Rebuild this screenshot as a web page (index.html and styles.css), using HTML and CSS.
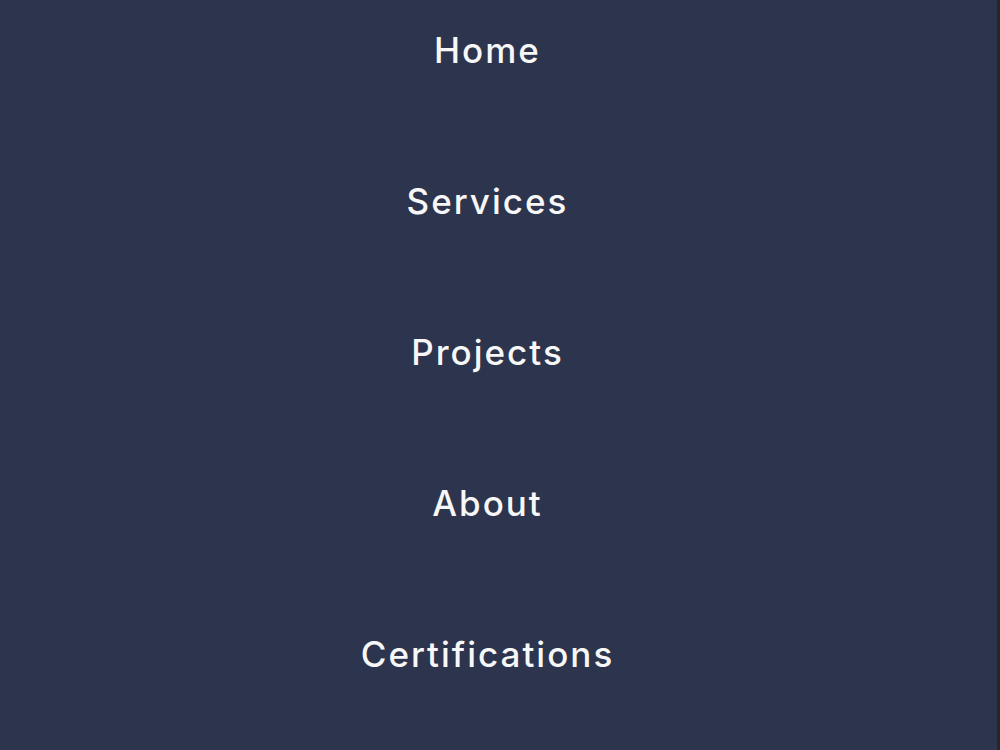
FILE: index.html
```html
<!doctype html>
<html lang="en">
<head>
    <meta charset="utf-8">
    <title>Menu</title>
    <meta name="viewport" content="width=device-width, initial-scale=1">
    <link rel="stylesheet" href="styles.css">
</head>
<body class="menu-body">
<div class="menu-page">
    <nav class="menu-nav">
        <ul class="menu-list">
            <li><a href="#home">Home</a></li>
            <li><a href="#services">Services</a></li>
            <li><a href="#projects">Projects</a></li>
            <li><a href="#about">About</a></li>
            <li><a href="#certifications">Certifications</a></li>
        </ul>
    </nav>
    <div class="menu-scrollbar"></div>
</div>
</body>
</html>
```

FILE: styles.css
```css
html, body {
    height: 100%;
}

.menu-body {
    margin: 0;
    background: #2c344e;
    font-family: "Inter", "Open Sans", sans-serif;
    -webkit-font-smoothing: antialiased;
    overflow: hidden;
}

.menu-page {
    display: flex;
    height: 100%;
}

.menu-nav {
    flex: 1;
    padding-right: 22px;
}

.menu-list {
    list-style: none;
    margin: 0;
    padding: 35px 0 0;
    display: flex;
    flex-direction: column;
    align-items: center;
    gap: 120px;
}

.menu-list a {
    display: block;
    color: #f7f7f7;
    text-decoration: none;
    font-size: 35px;
    font-weight: 500;
    line-height: 31px;
    letter-spacing: 2px;
}

.menu-scrollbar {
    width: 3px;
    background: #262626;
}
```
